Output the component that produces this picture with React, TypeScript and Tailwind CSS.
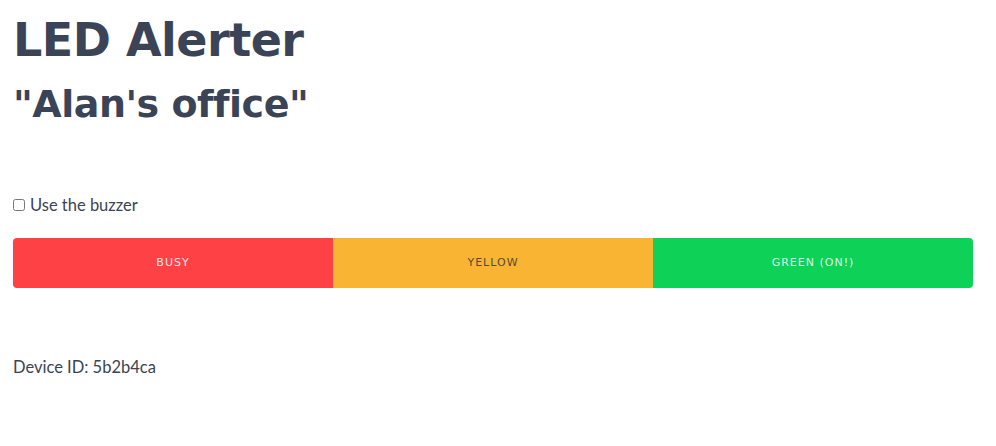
const buttons = [
  { label: "Busy", className: "bg-[#fe4145] text-[#ffe4ea] rounded-l-[4px]" },
  { label: "Yellow", className: "bg-[#fab433] text-[#5b4a33]" },
  { label: "Green (On!)", className: "bg-[#0ed158] text-[#d9f7e2] rounded-r-[4px]" },
];

export default function App() {
  return (
    <div className="min-h-screen bg-white pl-[13px] pr-[23px] text-[#3a4456] font-['Lato','Noto_Sans',sans-serif]">
      <h1 className="pt-[13px] text-[46px] font-bold leading-[54px] font-['DejaVu_Sans',sans-serif] tracking-[-0.5px]">
        LED Alerter
      </h1>
      <h2 className="mt-[14px] text-[38px] font-bold leading-[46px] font-['DejaVu_Sans',sans-serif] tracking-[-0.5px]">
        "Alan's office"
      </h2>

      <label className="mt-[68px] flex items-center gap-[5px] text-[16.5px] leading-[20px]">
        <input type="checkbox" className="h-[12px] w-[12px] accent-gray-400" />
        <span>Use the buzzer</span>
      </label>

      <div className="mt-[23px] grid grid-cols-3">
        {buttons.map((b) => (
          <button
            key={b.label}
            className={`h-[50px] text-[11px] uppercase tracking-[1px] font-['DejaVu_Sans',sans-serif] ${b.className}`}
          >
            {b.label}
          </button>
        ))}
      </div>

      <p className="mt-[69px] text-[16.5px] leading-[20px]">Device ID: 5b2b4ca</p>
    </div>
  );
}
